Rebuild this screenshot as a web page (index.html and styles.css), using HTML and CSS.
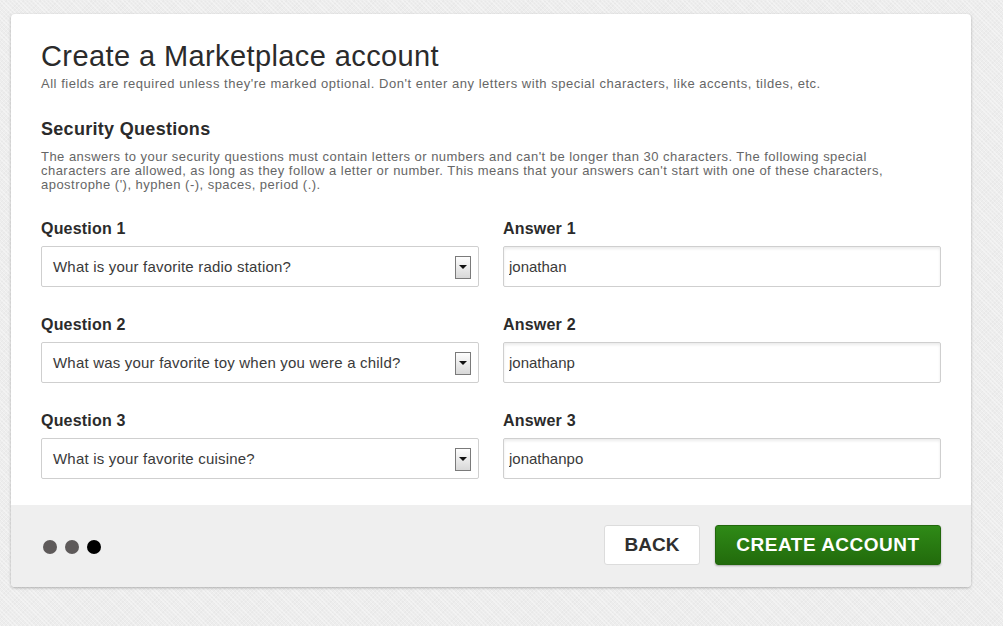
FILE: index.html
```html
<!DOCTYPE html>
<html lang="en">
<head>
<meta charset="utf-8">
<title>Create a Marketplace account</title>
<link rel="stylesheet" href="styles.css">
</head>
<body>
<div class="card">
  <div class="card-body">
    <h1 class="title">Create a Marketplace account</h1>
    <p class="subtitle">All fields are required unless they're marked optional. Don't enter any letters with special characters, like accents, tildes, etc.</p>
    <h2 class="section-title">Security Questions</h2>
    <p class="help">The answers to your security questions must contain letters or numbers and can't be longer than 30 characters. The following special characters are allowed, as long as they follow a letter or number. This means that your answers can't start with one of these characters, apostrophe ('), hyphen (-), spaces, period (.).</p>
    <div class="grid">
      <div class="field">
        <label class="label">Question 1</label>
        <div class="select"><span class="select-text">What is your favorite radio station?</span><span class="arrow"><span class="tri"></span></span></div>
      </div>
      <div class="field">
        <label class="label">Answer 1</label>
        <input class="input" type="text" value="jonathan">
      </div>
      <div class="field">
        <label class="label">Question 2</label>
        <div class="select"><span class="select-text">What was your favorite toy when you were a child?</span><span class="arrow"><span class="tri"></span></span></div>
      </div>
      <div class="field">
        <label class="label">Answer 2</label>
        <input class="input" type="text" value="jonathanp">
      </div>
      <div class="field">
        <label class="label">Question 3</label>
        <div class="select"><span class="select-text">What is your favorite cuisine?</span><span class="arrow"><span class="tri"></span></span></div>
      </div>
      <div class="field">
        <label class="label">Answer 3</label>
        <input class="input" type="text" value="jonathanpo">
      </div>
    </div>
  </div>
  <div class="card-footer">
    <div class="dots">
      <span class="dot"></span>
      <span class="dot"></span>
      <span class="dot active"></span>
    </div>
    <div class="actions">
      <button class="btn btn-back" type="button">BACK</button>
      <button class="btn btn-primary" type="button">CREATE ACCOUNT</button>
    </div>
  </div>
</div>
</body>
</html>
```

FILE: styles.css
```css
* { box-sizing: border-box; }

html, body {
  margin: 0;
  padding: 0;
}

body {
  background-color: #ededed;
  background-image:
    repeating-linear-gradient(45deg, rgba(255,255,255,0.35) 0 1px, transparent 1px 3px),
    repeating-linear-gradient(-45deg, rgba(0,0,0,0.02) 0 1px, transparent 1px 3px);
  font-family: "Liberation Sans", Arial, sans-serif;
  color: #333;
  padding: 14px 0 0 11px;
  min-height: 626px;
}

.card {
  width: 960px;
  background: #fff;
  border-radius: 4px;
  box-shadow: 0 1px 3px rgba(0, 0, 0, 0.28);
  overflow: hidden;
}

.card-body {
  padding: 26px 30px 26px 30px;
}

.title {
  margin: 0;
  font-size: 29px;
  line-height: 32px;
  font-weight: normal;
  color: #2b2b2b;
  letter-spacing: 0.4px;
}

.subtitle {
  margin: 4px 0 0;
  font-size: 13px;
  line-height: 16px;
  color: #666;
  letter-spacing: 0.52px;
}

.section-title {
  margin: 26px 0 0;
  font-size: 18px;
  line-height: 22px;
  font-weight: bold;
  color: #2b2b2b;
  letter-spacing: 0.3px;
}

.help {
  margin: 10px 0 0;
  font-size: 13px;
  line-height: 14px;
  color: #666;
  letter-spacing: 0.47px;
  max-width: 880px;
}

.grid {
  margin-top: 28px;
  display: grid;
  grid-template-columns: 438px 438px;
  column-gap: 24px;
  row-gap: 29px;
}

.field {
  display: flex;
  flex-direction: column;
}

.label {
  font-size: 16px;
  line-height: 18px;
  font-weight: bold;
  color: #2b2b2b;
  margin-bottom: 8px;
  padding-top: 1px;
  margin-top: -1px;
  letter-spacing: 0.2px;
}

.select {
  height: 41px;
  border: 1px solid #cfcfcf;
  border-radius: 2px;
  background: #fff;
  display: flex;
  align-items: center;
  justify-content: space-between;
  padding: 0 7px 0 11px;
}

.select-text {
  font-size: 15px;
  color: #3a3a3a;
  letter-spacing: 0.2px;
}

.arrow {
  width: 16px;
  height: 23px;
  border: 1px solid #7a7a7a;
  background: linear-gradient(#fdfdfd, #d8d8d8);
  display: flex;
  align-items: center;
  justify-content: center;
  margin-top: 1px;
}

.tri {
  width: 0;
  height: 0;
  border-left: 4px solid transparent;
  border-right: 4px solid transparent;
  border-top: 4px solid #111;
}

.input {
  height: 41px;
  border: 1px solid #cfcfcf;
  border-radius: 2px;
  box-shadow: inset 0 2px 3px rgba(0, 0, 0, 0.08);
  padding: 0 5px;
  font-family: "Liberation Sans", Arial, sans-serif;
  font-size: 15px;
  color: #3a3a3a;
  background: #fff;
  outline: none;
  margin: 0;
}

.card-footer {
  background: #efefef;
  height: 82px;
  padding: 20px 30px 0 32px;
  display: flex;
  justify-content: space-between;
  align-items: flex-start;
}

.dots {
  display: flex;
  gap: 8px;
  margin-top: 15px;
}

.dot {
  width: 14px;
  height: 14px;
  border-radius: 50%;
  background: #5e5a5a;
}

.dot.active {
  background: #000;
}

.actions {
  display: flex;
  gap: 15px;
}

.btn {
  height: 40px;
  padding: 0;
  font-family: "Liberation Sans", Arial, sans-serif;
  font-size: 19px;
  font-weight: bold;
  border-radius: 3px;
  cursor: pointer;
  margin: 0;
}

.btn-back {
  width: 96px;
  background: #fff;
  border: 1px solid #dcdcdc;
  color: #2f2f2f;
}

.btn-primary {
  width: 226px;
  background: linear-gradient(#2f8a17, #226b0c);
  border: 1px solid #22670c;
  color: #fff;
  letter-spacing: 0.5px;
  box-shadow: 0 1px 2px rgba(0, 0, 0, 0.3);
}
```
